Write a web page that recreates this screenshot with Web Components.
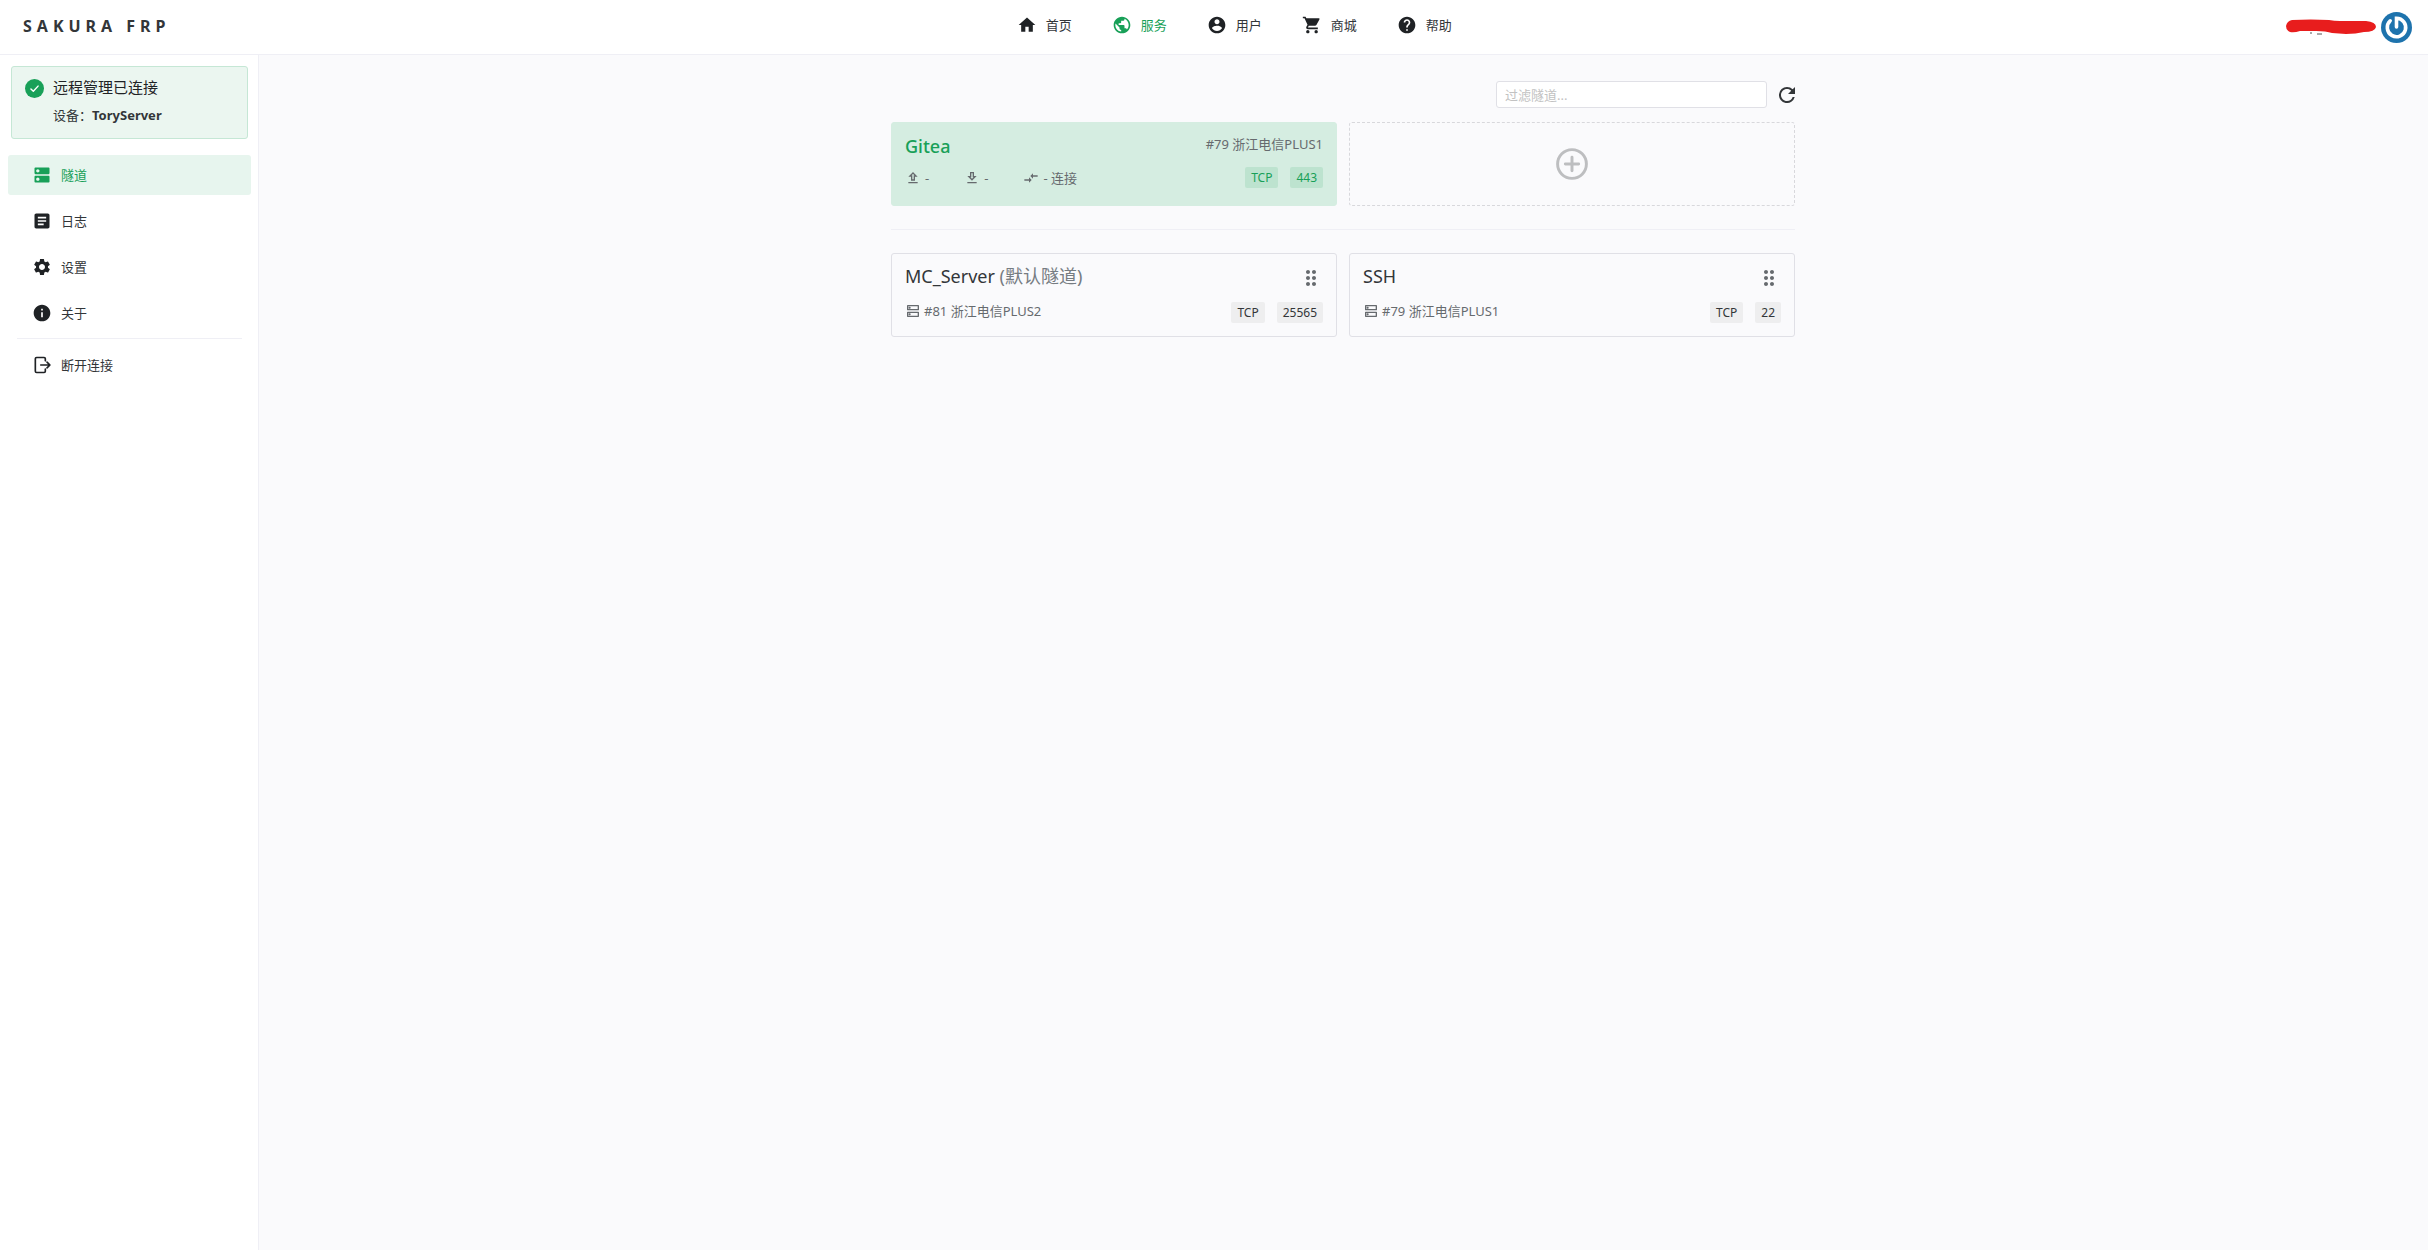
<!DOCTYPE html>
<html lang="zh-CN">
<head>
<meta charset="UTF-8">
<meta name="viewport" content="width=device-width, initial-scale=1">
<title>SAKURA FRP</title>
<style>
    html, body {
        height: 100%;
        margin: 0;
    }

    body {
        font-family: "Noto Sans", "Noto Sans CJK SC", sans-serif;
        font-size: 13px;
        line-height: 20px;
        color: #333639;
        background: #fafafc;
        --green: #18a058;
        --line: #efeff5;
    }
</style>
</head>
<body>
<frp-app></frp-app>

<script>
const icons = {
    home: 'M10 20v-6h4v6h5v-8h3L12 3 2 12h3v8z',
    globe: 'M12 2C6.48 2 2 6.48 2 12s4.48 10 10 10 10-4.48 10-10S17.52 2 12 2zm-1 17.93c-3.95-.49-7-3.85-7-7.93 0-.62.08-1.21.21-1.79L9 15v1c0 1.1.9 2 2 2v1.93zm6.9-2.54c-.26-.81-1-1.39-1.9-1.39h-1v-3c0-.55-.45-1-1-1H8v-2h2c.55 0 1-.45 1-1V7h2c1.1 0 2-.9 2-2v-.41c2.93 1.19 5 4.06 5 7.41 0 2.08-.8 3.97-2.1 5.39z',
    user: 'M12 2C6.48 2 2 6.48 2 12s4.48 10 10 10 10-4.48 10-10S17.52 2 12 2zm0 3c1.66 0 3 1.34 3 3s-1.34 3-3 3-3-1.34-3-3 1.34-3 3-3zm0 14.2c-2.5 0-4.71-1.28-6-3.22.03-1.99 4-3.08 6-3.08 1.99 0 5.97 1.09 6 3.08-1.29 1.94-3.5 3.22-6 3.22z',
    cart: 'M7 18c-1.1 0-1.99.9-1.99 2S5.9 22 7 22s2-.9 2-2-.9-2-2-2zM1 2v2h2l3.6 7.59-1.35 2.45c-.16.28-.25.61-.25.96 0 1.1.9 2 2 2h12v-2H7.42c-.14 0-.25-.11-.25-.25l.03-.12.9-1.63h7.45c.75 0 1.41-.41 1.75-1.03l3.58-6.49A1.003 1.003 0 0 0 20 4H5.21l-.94-2H1zm16 16c-1.1 0-1.99.9-1.99 2s.89 2 1.99 2 2-.9 2-2-.9-2-2-2z',
    help: 'M12 2C6.48 2 2 6.48 2 12s4.48 10 10 10 10-4.48 10-10S17.52 2 12 2zm1 17h-2v-2h2v2zm2.07-7.75l-.9.92C13.45 12.9 13 13.5 13 15h-2v-.5c0-1.1.45-2.1 1.17-2.83l1.24-1.26c.37-.36.59-.86.59-1.41 0-1.1-.9-2-2-2s-2 .9-2 2H8c0-2.21 1.79-4 4-4s4 1.79 4 4c0 .88-.36 1.68-.93 2.25z',
    dns: 'M20 13H4c-.55 0-1 .45-1 1v6c0 .55.45 1 1 1h16c.55 0 1-.45 1-1v-6c0-.55-.45-1-1-1zM7 19c-1.1 0-2-.9-2-2s.9-2 2-2 2 .9 2 2-.9 2-2 2zM20 3H4c-.55 0-1 .45-1 1v6c0 .55.45 1 1 1h16c.55 0 1-.45 1-1V4c0-.55-.45-1-1-1zM7 9c-1.1 0-2-.9-2-2s.9-2 2-2 2 .9 2 2-.9 2-2 2z',
    dnsOutline: 'M19 15v4H5v-4h14m1-2H4c-.55 0-1 .45-1 1v6c0 .55.45 1 1 1h16c.55 0 1-.45 1-1v-6c0-.55-.45-1-1-1zM7 18.5c-.82 0-1.5-.67-1.5-1.5s.68-1.5 1.5-1.5 1.5.67 1.5 1.5-.67 1.5-1.5 1.5zM19 5v4H5V5h14m1-2H4c-.55 0-1 .45-1 1v6c0 .55.45 1 1 1h16c.55 0 1-.45 1-1V4c0-.55-.45-1-1-1zM7 8.5c-.82 0-1.5-.67-1.5-1.5S6.18 5.5 7 5.5s1.5.68 1.5 1.5S7.83 8.5 7 8.5z',
    log: 'M19 3H5c-1.1 0-2 .9-2 2v14c0 1.1.9 2 2 2h14c1.1 0 2-.9 2-2V5c0-1.1-.9-2-2-2zm-5 14H7v-2h7v2zm3-4H7v-2h10v2zm0-4H7V7h10v2z',
    settings: 'M19.14 12.94c.04-.3.06-.61.06-.94 0-.32-.02-.64-.07-.94l2.03-1.58a.49.49 0 0 0 .12-.61l-1.92-3.32a.488.488 0 0 0-.59-.22l-2.39.96c-.5-.38-1.03-.7-1.62-.94l-.36-2.54a.484.484 0 0 0-.48-.41h-3.84c-.24 0-.43.17-.47.41l-.36 2.54c-.59.24-1.13.57-1.62.94l-2.39-.96c-.22-.08-.47 0-.59.22L2.74 8.87c-.12.21-.08.47.12.61l2.03 1.58c-.05.3-.09.63-.09.94s.02.64.07.94l-2.03 1.58a.49.49 0 0 0-.12.61l1.92 3.32c.12.22.37.29.59.22l2.39-.96c.5.38 1.03.7 1.62.94l.36 2.54c.05.24.24.41.48.41h3.84c.24 0 .44-.17.47-.41l.36-2.54c.59-.24 1.13-.56 1.62-.94l2.39.96c.22.08.47 0 .59-.22l1.92-3.32c.12-.22.07-.47-.12-.61l-2.01-1.58zM12 15.6c-1.98 0-3.6-1.62-3.6-3.6s1.62-3.6 3.6-3.6 3.6 1.62 3.6 3.6-1.62 3.6-3.6 3.6z',
    info: 'M12 2C6.48 2 2 6.48 2 12s4.48 10 10 10 10-4.48 10-10S17.52 2 12 2zm1 15h-2v-6h2v6zm0-8h-2V7h2v2z',
    upload: 'M9 16h6v-6h4l-7-7-7 7h4v6zm3-10.17L14.17 8H13v6h-2V8H9.83L12 5.83zM5 18h14v2H5z',
    download: 'M19 9h-4V3H9v6H5l7 7 7-7zm-8 2V5h2v6h1.17L12 13.17 9.83 11H11zm-6 7h14v2H5z',
    compare: 'M9.01 14H2v2h7.01v3L13 15l-3.99-4v3zm5.98-1v-3H22V8h-7.01V5L11 9l3.99 4z',
    drag: 'M11 18c0 1.1-.9 2-2 2s-2-.9-2-2 .9-2 2-2 2 .9 2 2zm-2-8c-1.1 0-2 .9-2 2s.9 2 2 2 2-.9 2-2-.9-2-2-2zm0-6c-1.1 0-2 .9-2 2s.9 2 2 2 2-.9 2-2-.9-2-2-2zm6 4c1.1 0 2-.9 2-2s-.9-2-2-2-2 .9-2 2 .9 2 2 2zm0 2c-1.1 0-2 .9-2 2s.9 2 2 2 2-.9 2-2-.9-2-2-2zm0 6c-1.1 0-2 .9-2 2s.9 2 2 2 2-.9 2-2-.9-2-2-2z',
    refresh: 'M17.65 6.35A7.958 7.958 0 0 0 12 4a8 8 0 1 0 7.73 10h-2.08A5.99 5.99 0 0 1 12 18c-3.31 0-6-2.69-6-6s2.69-6 6-6c1.66 0 3.14.69 4.22 1.78L13 11h7V4z'
}

// icons that are stroked instead of filled
const strokes = {
    exit: '<path d="M16 7V4.5Q16 3 14.5 3H5.500Q4 3 4 4.5V19.5Q4 21 5.5 21H14.5Q16 21 16 19.5V17M10.500 12H21M18 8.500L21.500 12L18 15.500" stroke-width="2"/>',
    check: '<circle cx="12" cy="12" r="12" fill="currentColor" stroke="none"/><path d="M7.5 12.5L10.5 15.5L16.5 9" stroke="#fff" stroke-width="1.8"/>',
    add: '<circle cx="12" cy="12" r="10.8" stroke-width="2.2"/><path d="M12 7V17M7 12H17" stroke-width="2.2"/>'
}

class FrpIcon extends HTMLElement {
    constructor(){
        super()
        this.attachShadow({mode : 'open'})
    }

    connectedCallback(){
        const name = this.getAttribute('name')
        const crop = name === 'refresh' ? '4 4 16 16' : '0 0 24 24'
        const body = icons[name]
            ? `<path fill="currentColor" d="${icons[name]}"/>`
            : `<g fill="none" stroke="currentColor" stroke-linecap="round" stroke-linejoin="round">${strokes[name]}</g>`
        this.shadowRoot.innerHTML = `
        <style>
            :host {
                display: block;
                flex: none;
                width: var(--size, 20px);
                height: var(--size, 20px);
            }

            svg {
                display: block;
                width: 100%;
                height: 100%;
            }
        </style>
        <svg viewBox="${crop}" aria-hidden="true">${body}</svg>
        `
    }
}

customElements.define('frp-icon', FrpIcon)

class NavLink extends HTMLElement {
    constructor(){
        super()
        this.attachShadow({mode : 'open'})
    }

    connectedCallback(){
        this.shadowRoot.innerHTML = `
        <style>
            :host {
                display: block;
            }

            a {
                display: flex;
                align-items: center;
                gap: 9px;
                color: inherit;
                text-decoration: none;
                white-space: nowrap;
            }

            frp-icon {
                color: #1f2225;
            }

            :host([active]) a,
            :host([active]) frp-icon {
                color: var(--green);
            }
        </style>
        <a href="#"><frp-icon name="${this.getAttribute('icon')}"></frp-icon><span><slot></slot></span></a>
        `
    }
}

customElements.define('nav-link', NavLink)

class TopBar extends HTMLElement {
    constructor(){
        super()
        this.attachShadow({mode : 'open'})
    }

    connectedCallback(){
        this.shadowRoot.innerHTML = `
        <style>
            :host {
                display: block;
                background: #fff;
                border-bottom: 1px solid var(--line);
            }

            header {
                display: flex;
                align-items: center;
                height: 54px;
                padding: 0 16px 0 23px;
            }

            .brand {
                font-size: 16px;
                font-weight: 700;
                letter-spacing: 5px;
                padding: 0 12px 3px 0;
            }

            nav {
                display: flex;
                flex: 1;
                justify-content: center;
                gap: 40px;
                padding-bottom: 4px;
            }

            .account {
                display: flex;
                align-items: center;
                gap: 5px;
            }

            .name {
                width: 90px;
                height: 16px;
            }

            .avatar {
                width: 31px;
                height: 31px;
            }
        </style>
        <header>
            <div class="brand">SAKURA FRP</div>
            <nav>
                <nav-link icon="home">首页</nav-link>
                <nav-link icon="globe" active>服务</nav-link>
                <nav-link icon="user">用户</nav-link>
                <nav-link icon="cart">商城</nav-link>
                <nav-link icon="help">帮助</nav-link>
            </nav>
            <div class="account">
                <svg class="name" viewBox="0 0 90 16" aria-hidden="true">
                    <path fill="#e81d1d" d="M6 1Q25 0 43 1Q48 2 54 2L80 2Q90 3 90 8Q89 13 78 13Q70 15 60 15L46 14Q40 12 30 12L14 12Q8 14 4 13Q0 11 0 7Q1 2 6 1z"/>
                    <path stroke="#555" d="M24 14h2M31 15h5"/>
                </svg>
                <svg class="avatar" viewBox="0 0 31 31" aria-hidden="true">
                    <circle cx="15.5" cy="15.5" r="15.5" fill="#1e73ad"/>
                    <path fill="none" stroke="#fff" stroke-width="3.6" stroke-linecap="round" d="M9.2 8.8A9.2 9.2 0 1 0 15.5 6.3V15"/>
                </svg>
            </div>
        </header>
        `
    }
}

customElements.define('top-bar', TopBar)

class MenuItem extends HTMLElement {
    constructor(){
        super()
        this.attachShadow({mode : 'open'})
    }

    connectedCallback(){
        this.shadowRoot.innerHTML = `
        <style>
            :host {
                display: block;
            }

            a {
                display: flex;
                align-items: center;
                gap: 9px;
                height: 40px;
                padding-left: 24px;
                border-radius: 3px;
                color: inherit;
                text-decoration: none;
            }

            frp-icon {
                color: #1f2225;
            }

            :host([active]) a {
                background: #e7f5ee;
            }

            :host([active]) a,
            :host([active]) frp-icon {
                color: var(--green);
            }
        </style>
        <a href="#"><frp-icon name="${this.getAttribute('icon')}"></frp-icon><span><slot></slot></span></a>
        `
    }
}

customElements.define('menu-item', MenuItem)

class StatusAlert extends HTMLElement {
    constructor(){
        super()
        this.attachShadow({mode : 'open'})
    }

    connectedCallback(){
        this.shadowRoot.innerHTML = `
        <style>
            :host {
                display: block;
                border: 1px solid #c5e7d5;
                border-radius: 3px;
                background: #ebf6f0;
            }

            .box {
                display: flex;
                gap: 9px;
                padding: 8px 13px 13px;
            }

            frp-icon {
                --size: 19px;
                color: var(--green);
                padding-top: 4px;
            }

            .title {
                font-size: 15px;
                line-height: 24px;
                color: #1f2225;
            }

            .text {
                padding-top: 6px;
            }
        </style>
        <div class="box" role="status">
            <frp-icon name="check"></frp-icon>
            <div>
                <div class="title"><slot name="title"></slot></div>
                <div class="text"><slot></slot></div>
            </div>
        </div>
        `
    }
}

customElements.define('status-alert', StatusAlert)

class SideBar extends HTMLElement {
    constructor(){
        super()
        this.attachShadow({mode : 'open'})
    }

    connectedCallback(){
        this.shadowRoot.innerHTML = `
        <style>
            :host {
                display: block;
                box-sizing: border-box;
                width: 259px;
                background: #fff;
                border-right: 1px solid var(--line);
            }

            status-alert {
                margin: 11px 10px 16px 11px;
            }

            nav {
                display: flex;
                flex-direction: column;
                gap: 6px;
                padding: 0 7px 0 8px;
            }

            hr {
                width: 225px;
                margin: -1px auto 0;
                border: 0;
                border-top: 1px solid var(--line);
            }
        </style>
        <status-alert><span slot="title">远程管理已连接</span>设备：<b>ToryServer</b></status-alert>
        <nav>
            <menu-item icon="dns" active>隧道</menu-item>
            <menu-item icon="log">日志</menu-item>
            <menu-item icon="settings">设置</menu-item>
            <menu-item icon="info">关于</menu-item>
            <hr>
            <menu-item icon="exit">断开连接</menu-item>
        </nav>
        `
    }
}

customElements.define('side-bar', SideBar)

class TagLabel extends HTMLElement {
    constructor(){
        super()
        this.attachShadow({mode : 'open'})
        this.shadowRoot.innerHTML = `
        <style>
            :host {
                display: block;
                padding: 0 6px;
                border-radius: 2px;
                font-size: 12px;
                line-height: 21px;
                color: var(--tag-color, #333639);
                background: var(--tag-bg, #eeeeef);
            }
        </style>
        <slot></slot>
        `
    }
}

customElements.define('tag-label', TagLabel)

class TunnelCard extends HTMLElement {
    constructor(){
        super()
        this.attachShadow({mode : 'open'})
    }

    connectedCallback(){
        const active = this.hasAttribute('active')
        const node = this.getAttribute('node')
        const top = active
            ? `<div class="node">${node}</div>`
            : '<button aria-label="排序"><frp-icon name="drag"></frp-icon></button>'
        const bottom = active
            ? `<div class="stats">
                <span><frp-icon name="upload"></frp-icon>-</span>
                <span><frp-icon name="download"></frp-icon>-</span>
                <span><frp-icon name="compare"></frp-icon>- 连接</span>
            </div>`
            : `<div class="node"><frp-icon name="dnsOutline"></frp-icon>${node}</div>`
        this.shadowRoot.innerHTML = `
        <style>
            :host {
                display: flex;
                flex-direction: column;
                box-sizing: border-box;
                min-height: 84px;
                padding: 11px 13px 12px;
                border: 1px solid #e0e0e6;
                border-radius: 3px;
            }

            :host([active]) {
                border-color: #d5ede1;
                background: #d5ede1;
                --tag-color: var(--green);
                --tag-bg: #bde3cf;
            }

            .row {
                display: flex;
                align-items: flex-start;
                justify-content: space-between;
                min-height: 26px;
            }

            .bottom {
                align-items: center;
                min-height: 0;
                padding-top: 10px;
            }

            .bottom .node {
                padding-bottom: 3px;
            }

            :host([active]) .bottom {
                padding-top: 7px;
            }

            h3 {
                margin: 0;
                font-size: 18px;
                font-weight: 400;
                line-height: 22px;
            }

            :host([active]) h3 {
                color: var(--green);
                font-weight: 500;
                line-height: 24px;
            }

            .node, .stats, .stats span, .tags {
                display: flex;
                align-items: center;
            }

            .node, .stats {
                color: #666a6e;
            }

            .node {
                gap: 3px;
            }

            .stats {
                gap: 35px;
            }

            .stats span {
                gap: 4px;
            }

            .tags {
                gap: 12px;
            }

            .node frp-icon, .stats frp-icon {
                --size: 16px;
            }

            button {
                padding: 1px 0;
                border: 0;
                color: #666a6e;
                background: none;
            }

            button frp-icon {
                --size: 24px;
            }

            ::slotted(small) {
                font-size: 18px;
                color: #767c82;
            }
        </style>
        <div class="row"><h3><slot></slot></h3>${top}</div>
        <div class="row bottom">
            ${bottom}
            <div class="tags"><tag-label>${this.getAttribute('type')}</tag-label><tag-label>${this.getAttribute('port')}</tag-label></div>
        </div>
        `
    }
}

customElements.define('tunnel-card', TunnelCard)

class AddCard extends HTMLElement {
    constructor(){
        super()
        this.attachShadow({mode : 'open'})
    }

    connectedCallback(){
        this.shadowRoot.innerHTML = `
        <style>
            :host {
                display: flex;
            }

            button {
                display: flex;
                flex: 1;
                align-items: center;
                justify-content: center;
                border: 1px dashed #d8d8dc;
                border-radius: 3px;
                color: #bdbec0;
                background: none;
            }

            frp-icon {
                --size: 32px;
            }
        </style>
        <button aria-label="新建隧道"><frp-icon name="add"></frp-icon></button>
        `
    }
}

customElements.define('add-card', AddCard)

class TunnelList extends HTMLElement {
    constructor(){
        super()
        this.attachShadow({mode : 'open'})
    }

    connectedCallback(){
        this.shadowRoot.innerHTML = `
        <style>
            :host {
                display: block;
                max-width: 904px;
                margin: 0 auto;
                padding: 26px 25px 26px 24px;
            }

            .tools {
                display: flex;
                align-items: center;
                justify-content: flex-end;
                gap: 12px;
                padding-bottom: 14px;
            }

            input {
                box-sizing: border-box;
                width: 271px;
                height: 27px;
                padding: 0 8px;
                border: 1px solid #e0e0e6;
                border-radius: 3px;
                font: inherit;
                background: #fff;
            }

            input::placeholder {
                color: #c2c2c2;
            }

            .tools button {
                padding: 0;
                border: 0;
                color: #333639;
                background: none;
                --size: 16px;
            }

            .grid {
                display: grid;
                grid-template-columns: 1fr 1fr;
                gap: 12px;
            }

            hr {
                margin: 23px 0;
                border: 0;
                border-top: 1px solid var(--line);
            }
        </style>
        <div class="tools">
            <input type="text" placeholder="过滤隧道..." aria-label="过滤隧道">
            <button aria-label="刷新"><frp-icon name="refresh"></frp-icon></button>
        </div>
        <div class="grid">
            <tunnel-card active node="#79 浙江电信PLUS1" type="TCP" port="443">Gitea</tunnel-card>
            <add-card></add-card>
        </div>
        <hr>
        <div class="grid">
            <tunnel-card node="#81 浙江电信PLUS2" type="TCP" port="25565">MC_Server <small>(默认隧道)</small></tunnel-card>
            <tunnel-card node="#79 浙江电信PLUS1" type="TCP" port="22">SSH</tunnel-card>
        </div>
        `
    }
}

customElements.define('tunnel-list', TunnelList)

class FrpApp extends HTMLElement {
    constructor(){
        super()
        this.attachShadow({mode : 'open'})
    }

    connectedCallback(){
        this.shadowRoot.innerHTML = `
        <style>
            :host {
                display: flex;
                flex-direction: column;
                min-height: 100%;
            }

            .body {
                display: flex;
                flex: 1;
            }

            side-bar {
                flex: none;
            }

            main {
                flex: 1;
                min-width: 0;
            }
        </style>
        <top-bar></top-bar>
        <div class="body">
            <side-bar></side-bar>
            <main><tunnel-list></tunnel-list></main>
        </div>
        `
    }
}

customElements.define('frp-app', FrpApp)
</script>
</body>
</html>
